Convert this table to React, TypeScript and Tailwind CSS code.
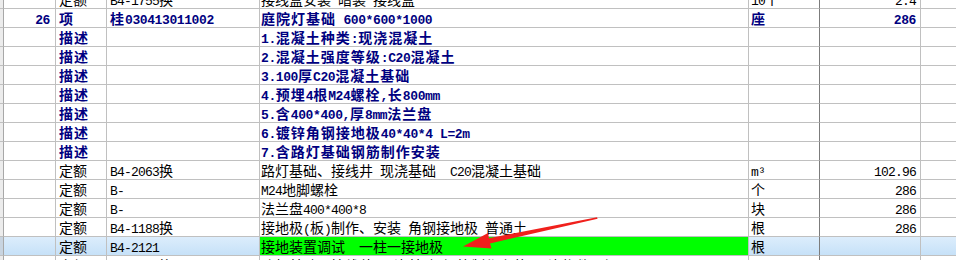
import React from "react";

type Row = {
  no?: string;
  kind: string;
  code?: string;
  name: string;
  unit?: string;
  qty?: string;
  style?: "item" | "desc" | "plain";
  selected?: boolean;
};

const rows: Row[] = [
  { kind: "定额", code: "B4-1755换", name: "接线盒安装 暗装 接线盒", unit: "10个", qty: "2.4" },
  { no: "26", kind: "项", code: "桂030413011002", name: "庭院灯基础 600*600*1000", unit: "座", qty: "286", style: "item" },
  { kind: "描述", name: "1.混凝土种类:现浇混凝土", style: "desc" },
  { kind: "描述", name: "2.混凝土强度等级:C20混凝土", style: "desc" },
  { kind: "描述", name: "3.100厚C20混凝土基础", style: "desc" },
  { kind: "描述", name: "4.预埋4根M24螺栓,长800mm", style: "desc" },
  { kind: "描述", name: "5.含400*400,厚8mm法兰盘", style: "desc" },
  { kind: "描述", name: "6.镀锌角钢接地极40*40*4 L=2m", style: "desc" },
  { kind: "描述", name: "7.含路灯基础钢筋制作安装", style: "desc" },
  { kind: "定额", code: "B4-2063换", name: "路灯基础、接线井 现浇基础  C20混凝土基础", unit: "m³", qty: "102.96" },
  { kind: "定额", code: "B-", name: "M24地脚螺栓", unit: "个", qty: "286" },
  { kind: "定额", code: "B-", name: "法兰盘400*400*8", unit: "块", qty: "286" },
  { kind: "定额", code: "B4-1188换", name: "接地极(板)制作、安装 角钢接地极 普通土", unit: "根", qty: "286" },
  { kind: "定额", code: "B4-2121", name: "接地装置调试  一柱一接地极", unit: "根", selected: true },
  { kind: "定额", code: "B4-2063换", name: "路灯基础、接线井 现浇基础 钢筋制作安装 现浇构件圆钢" },
];

// SimSun-like widths: ascii runs are half the width of CJK glyphs
const Txt = ({ s, bold }: { s?: string; bold?: boolean }) => {
  if (!s) return null;
  const parts = s.split(/([\x20-\x7e³]+)/).filter((p) => p !== "");
  return (
    <>
      {parts.map((p, i) =>
        /^[\x20-\x7e³]+$/.test(p) ? (
          <span
            key={i}
            className={`font-['Liberation_Mono',monospace] text-[13px] whitespace-pre ${bold ? "tracking-[-0.4px]" : "tracking-[-0.8px]"}`}
          >
            {p}
          </span>
        ) : (
          <span key={i}>{p}</span>
        )
      )}
    </>
  );
};

const cell = "h-[19px] border-b border-r border-[#c0c0c0] leading-[18px] whitespace-nowrap overflow-hidden";

export default function App() {
  return (
    <div className="relative h-[260px] w-[956px] overflow-hidden bg-white font-['Noto_Sans_CJK_SC',sans-serif] text-[14px] text-black">
      <div className="-mt-[10px] grid grid-cols-[4px_52px_51px_153px_489px_71px_101px_1fr]">
        {rows.map((r, i) => {
          const bold = r.style === "item" || r.style === "desc";
          const tone = bold ? "font-bold text-[#000080] tracking-[1px]" : "";
          const rowBg = r.selected ? "bg-linear-to-b from-[#dcedfc] to-[#c6e1f8]" : "";
          return (
            <React.Fragment key={i}>
              <div className={`${cell} border-r-[#a8a8a8] ${r.selected ? "bg-[#c8d4e0]" : "bg-[#ececec]"}`} />
              <div className={`${cell} ${rowBg} ${tone} pr-[5px] text-right`}>
                <Txt s={r.no} bold={bold} />
              </div>
              <div className={`${cell} ${rowBg} ${tone} pl-[3px]`}>{r.kind}</div>
              <div className={`${cell} ${rowBg} ${tone} pl-[3px]`}>
                <Txt s={r.code} bold={bold} />
              </div>
              <div className={`${cell} ${r.selected ? "bg-[#00ff00]" : ""} ${tone} pl-[1px]`}>
                <Txt s={r.name} bold={bold} />
              </div>
              <div className={`${cell} border-r-[#7c7c7c] ${rowBg} ${tone} pl-[2px]`}>
                <Txt s={r.unit} bold={bold} />
              </div>
              <div className={`${cell} ${rowBg} ${tone} pr-[4px] text-right`}>
                <Txt s={r.qty} bold={bold} />
              </div>
              <div className={`${cell} border-r-0 ${rowBg}`} />
            </React.Fragment>
          );
        })}
      </div>

      {/* red annotation arrow */}
      <svg className="pointer-events-none absolute left-0 top-0" width="956" height="260">
        <polygon
          points="463,246.5 488,233 489,238.2 597,217.2 597.6,218.8 490,243.4 491.5,248.6"
          fill="#f0201c"
        />
      </svg>
    </div>
  );
}
